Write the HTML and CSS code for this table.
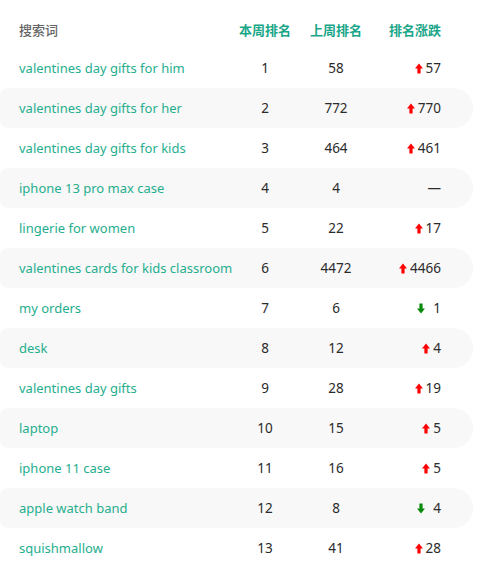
FILE: index.html
```html
<!DOCTYPE html>
<html lang="zh">
<head>
<meta charset="utf-8">
<link rel="stylesheet" href="styles.css">
</head>
<body>
<div class="table">
  <div class="row head">
    <div class="kw-h">搜索词</div>
    <div class="c">本周排名</div>
    <div class="c">上周排名</div>
    <div class="r">排名涨跌</div>
  </div>
  <div class="row"><div class="kw">valentines day gifts for him</div><div class="c">1</div><div class="c">58</div><div class="r"><svg class="up" viewBox="0 0 8 10"><polygon points="4,0 8,5 5.6,5 5.6,10 2.4,10 2.4,5 0,5"/></svg>57</div></div>
  <div class="row alt"><div class="kw">valentines day gifts for her</div><div class="c">2</div><div class="c">772</div><div class="r"><svg class="up" viewBox="0 0 8 10"><polygon points="4,0 8,5 5.6,5 5.6,10 2.4,10 2.4,5 0,5"/></svg>770</div></div>
  <div class="row"><div class="kw">valentines day gifts for kids</div><div class="c">3</div><div class="c">464</div><div class="r"><svg class="up" viewBox="0 0 8 10"><polygon points="4,0 8,5 5.6,5 5.6,10 2.4,10 2.4,5 0,5"/></svg>461</div></div>
  <div class="row alt"><div class="kw">iphone 13 pro max case</div><div class="c">4</div><div class="c">4</div><div class="r">—</div></div>
  <div class="row"><div class="kw">lingerie for women</div><div class="c">5</div><div class="c">22</div><div class="r"><svg class="up" viewBox="0 0 8 10"><polygon points="4,0 8,5 5.6,5 5.6,10 2.4,10 2.4,5 0,5"/></svg>17</div></div>
  <div class="row alt"><div class="kw">valentines cards for kids classroom</div><div class="c">6</div><div class="c">4472</div><div class="r"><svg class="up" viewBox="0 0 8 10"><polygon points="4,0 8,5 5.6,5 5.6,10 2.4,10 2.4,5 0,5"/></svg>4466</div></div>
  <div class="row"><div class="kw">my orders</div><div class="c">7</div><div class="c">6</div><div class="r"><svg class="down" viewBox="0 0 8 10"><polygon points="4,10 8,5 5.6,5 5.6,0 2.4,0 2.4,5 0,5"/></svg><span class="sp">1</span></div></div>
  <div class="row alt"><div class="kw">desk</div><div class="c">8</div><div class="c">12</div><div class="r"><svg class="up" viewBox="0 0 8 10"><polygon points="4,0 8,5 5.6,5 5.6,10 2.4,10 2.4,5 0,5"/></svg>4</div></div>
  <div class="row"><div class="kw">valentines day gifts</div><div class="c">9</div><div class="c">28</div><div class="r"><svg class="up" viewBox="0 0 8 10"><polygon points="4,0 8,5 5.6,5 5.6,10 2.4,10 2.4,5 0,5"/></svg>19</div></div>
  <div class="row alt"><div class="kw">laptop</div><div class="c">10</div><div class="c">15</div><div class="r"><svg class="up" viewBox="0 0 8 10"><polygon points="4,0 8,5 5.6,5 5.6,10 2.4,10 2.4,5 0,5"/></svg>5</div></div>
  <div class="row"><div class="kw">iphone 11 case</div><div class="c">11</div><div class="c">16</div><div class="r"><svg class="up" viewBox="0 0 8 10"><polygon points="4,0 8,5 5.6,5 5.6,10 2.4,10 2.4,5 0,5"/></svg>5</div></div>
  <div class="row alt"><div class="kw">apple watch band</div><div class="c">12</div><div class="c">8</div><div class="r"><svg class="down" viewBox="0 0 8 10"><polygon points="4,10 8,5 5.6,5 5.6,0 2.4,0 2.4,5 0,5"/></svg><span class="sp">4</span></div></div>
  <div class="row"><div class="kw">squishmallow</div><div class="c">13</div><div class="c">41</div><div class="r"><svg class="up" viewBox="0 0 8 10"><polygon points="4,0 8,5 5.6,5 5.6,10 2.4,10 2.4,5 0,5"/></svg>28</div></div>
</div>
</body>
</html>
```

FILE: styles.css
```css
html, body {
  margin: 0;
  padding: 0;
  background: #fff;
}
body {
  font-family: "Noto Sans", "Noto Sans CJK SC", sans-serif;
  font-size: 13.5px;
  color: #2b2b2b;
}
.table {
  width: 473px;
  padding-top: 7px;
}
.row {
  display: grid;
  grid-template-columns: minmax(0, 1fr) 58px 84px 63px;
  align-items: center;
  height: 40px;
  padding: 0 32px 0 19px;
  box-sizing: border-box;
}
.row.alt {
  background: #f8f8f8;
  border-radius: 8px 20px 20px 8px;
}
.head {
  font-family: "Noto Sans CJK SC", sans-serif;
  font-size: 13px;
  font-weight: 700;
  color: #1aa688;
  height: 41px;
  padding-top: 4px;
}
.kw-h {
  color: #666;
  font-weight: 500;
}
.kw {
  color: #25ae8e;
  font-size: 13px;
  white-space: nowrap;
}
.c {
  text-align: center;
}
.r {
  display: flex;
  justify-content: flex-end;
  align-items: center;
}
.up, .down {
  width: 8px;
  height: 11px;
  margin-right: 3px;
}
.up { fill: #ff0000; }
.down { fill: #0a8a0a; }
.sp { margin-left: 5px; }
```
